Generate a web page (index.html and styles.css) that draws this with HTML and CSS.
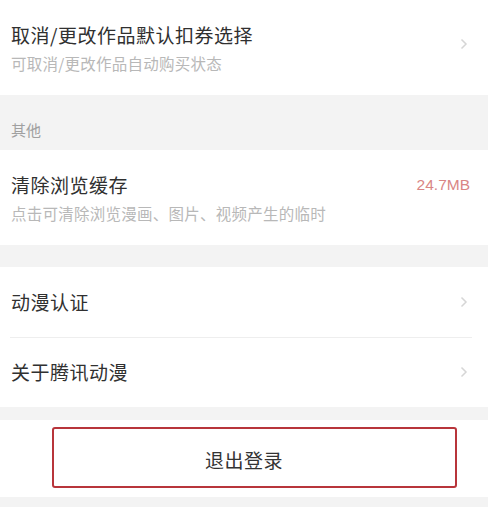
FILE: index.html
```html
<!DOCTYPE html>
<html lang="zh-CN">
<head>
    <meta charset="UTF-8">
    <title>设置</title>
    <meta name="viewport" content="width=device-width, initial-scale=1">
    <link rel="stylesheet" href="styles.css">
</head>
<body>

<div class="page">
    <section class="group">
        <div class="item item-tall">
            <div class="item-text">
                <div class="item-title">取消/更改作品默认扣券选择</div>
                <div class="item-desc">可取消/更改作品自动购买状态</div>
            </div>
            <svg class="chevron" width="8" height="12" viewBox="0 0 8 12"><path d="M1.5 1.5 L6 6 L1.5 10.5" /></svg>
        </div>
    </section>

    <div class="group-label">其他</div>

    <section class="group">
        <div class="item item-tall">
            <div class="item-text">
                <div class="item-title">清除浏览缓存</div>
                <div class="item-desc">点击可清除浏览漫画、图片、视频产生的临时</div>
            </div>
            <span class="item-value">24.7MB</span>
        </div>
    </section>

    <div class="spacer"></div>

    <section class="group">
        <div class="item">
            <div class="item-title">动漫认证</div>
            <svg class="chevron" width="8" height="12" viewBox="0 0 8 12"><path d="M1.5 1.5 L6 6 L1.5 10.5" /></svg>
        </div>
        <div class="item">
            <div class="item-title">关于腾讯动漫</div>
            <svg class="chevron" width="8" height="12" viewBox="0 0 8 12"><path d="M1.5 1.5 L6 6 L1.5 10.5" /></svg>
        </div>
    </section>

    <div class="logout-bar">
        <button class="logout">退出登录</button>
        <div class="mark"></div>
    </div>
</div>

</body>
</html>
```

FILE: styles.css
```css
body {
    margin: 0;
    padding: 0;
    background: #fff;
    font-family: "Noto Sans CJK SC", "Noto Sans", sans-serif;
    color: #333;
}
.page {
    width: 488px;
    height: 507px;
    background: #f3f3f3;
    overflow: hidden;
}
.group {
    background: #fff;
}
.item {
    display: flex;
    align-items: center;
    justify-content: space-between;
    height: 70px;
    padding: 0 20px 0 11px;
    position: relative;
}
.item + .item::before {
    content: "";
    position: absolute;
    top: 0;
    left: 10px;
    right: 16px;
    height: 1px;
    background: #eee;
}
.item-tall {
    height: auto;
    padding-top: 22px;
    padding-bottom: 21px;
}
.item-title {
    font-size: 19px;
    line-height: 26px;
    letter-spacing: 0.5px;
    color: #303030;
}
.item-desc {
    margin-top: 4px;
    font-size: 15.5px;
    line-height: 22px;
    letter-spacing: 0.25px;
    color: #b8b8b8;
}
.item-tall .chevron {
    margin-top: -8px;
}
.item-value {
    align-self: flex-start;
    margin-top: 1px;
    margin-right: -2px;
    font-family: "Liberation Sans", Arial, sans-serif;
    font-size: 15.5px;
    line-height: 24px;
    color: #d98585;
}
.chevron {
    fill: none;
    stroke: #d6d6d6;
    stroke-width: 1.5;
}
.group-label {
    height: 55px;
    box-sizing: border-box;
    padding: 25px 0 0 11px;
    font-size: 15px;
    line-height: 20px;
    color: #a0a0a0;
}
.spacer {
    height: 22px;
}
.logout-bar {
    position: relative;
    margin-top: 13px;
    height: 77px;
    background: #fff;
    display: flex;
    align-items: center;
    justify-content: center;
}
.logout {
    border: none;
    background: none;
    padding: 0;
    margin-top: 2px;
    font-family: inherit;
    font-size: 19px;
    letter-spacing: 0.5px;
    color: #333;
}
.mark {
    position: absolute;
    left: 52px;
    top: 7px;
    width: 405px;
    height: 61px;
    box-sizing: border-box;
    border: 2px solid #b8353b;
    border-radius: 3px;
}
```
